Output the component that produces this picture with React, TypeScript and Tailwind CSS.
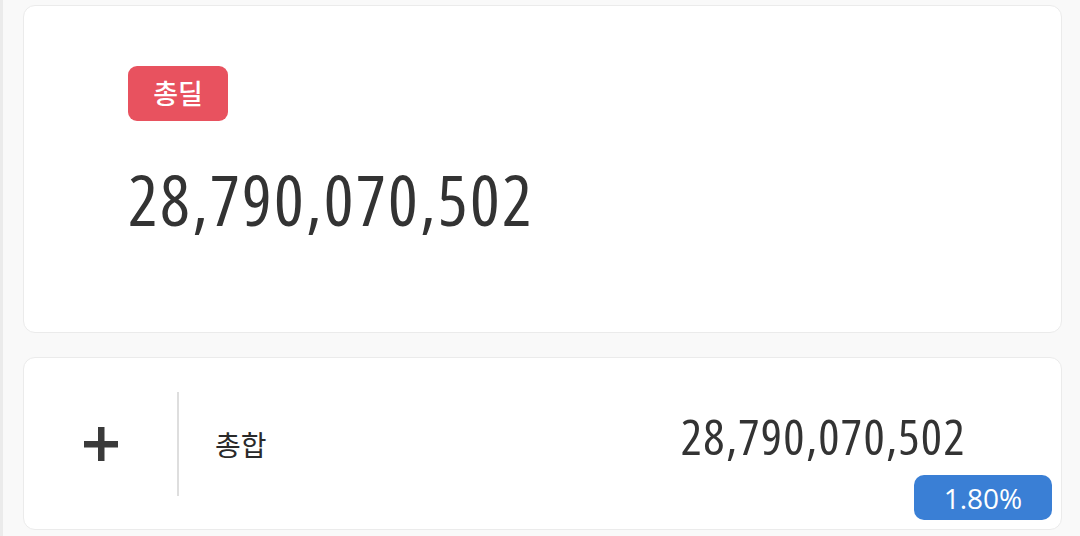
import React from "react";

export default function App() {
  const kr = { fontFamily: '"Noto Sans CJK KR", "Noto Sans", sans-serif' };
  const num = { fontFamily: '"Open Sans", "Noto Sans", sans-serif' };
  return (
    <div
      className="w-[1080px] h-[536px] bg-[#f9f9f9] border-l-[3px] border-[#ebebeb] pl-[20px] pr-[18px] pt-[5px] flex flex-col gap-[24px]"
      style={kr}
    >
      <div className="h-[328px] bg-white border border-[#ebebeb] rounded-[12px] pl-[104px] pt-[60px] flex flex-col items-start">
        <div className="h-[55px] w-[100px] rounded-[9px] bg-[#e8525f] text-white text-[27px] font-medium flex items-center justify-center">
          총딜
        </div>
        <div
          className="mt-[43px] text-[70px] leading-none text-[#333333] font-stretch-condensed tracking-[2.3px]"
          style={num}
        >
          28,790,070,502
        </div>
      </div>
      <div className="relative h-[173px] bg-white border border-[#ebebeb] rounded-[12px] flex items-center">
        <div className="w-[153px] flex justify-center items-center">
          <svg width="34" height="34" viewBox="0 0 34 34">
            <rect x="14" y="0" width="6.5" height="34" fill="#3a3a3a" />
            <rect x="0" y="14" width="34" height="6.5" fill="#3a3a3a" />
          </svg>
        </div>
        <div className="w-[2px] h-[104px] bg-[#dedede]" />
        <div className="ml-[36px] text-[28px] text-[#2a2a2a] font-normal">총합</div>
        <div
          className="ml-auto mr-[95px] text-[50px] leading-none text-[#333333] font-stretch-condensed tracking-[1.3px] -mt-[16px]"
          style={num}
        >
          28,790,070,502
        </div>
        <div
          className="absolute right-[9px] bottom-[9px] h-[45px] w-[138px] rounded-[10px] bg-[#3a7fd5] text-white text-[28px] flex items-center justify-center"
          style={num}
        >
          1.80%
        </div>
      </div>
    </div>
  );
}
